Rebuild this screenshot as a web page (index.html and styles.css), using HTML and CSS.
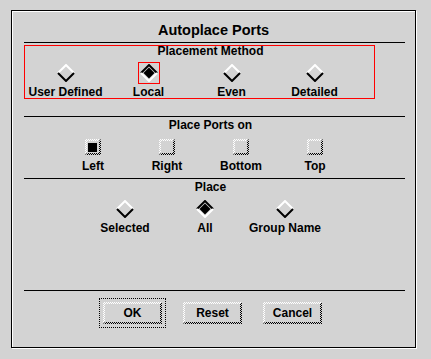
FILE: index.html
```html
<!DOCTYPE html>
<html>
<head>
<meta charset="utf-8">
<link rel="stylesheet" href="styles.css">
</head>
<body>
<div class="dialog">
  <div class="title">Autoplace Ports</div>
  <div class="sep"></div>

  <div class="section method">
    <div class="sec-title">Placement Method</div>
    <div class="opts cols-method">
      <div class="opt">
        <span class="rwrap"><svg class="dia" width="18" height="18" viewBox="0 0 18 18"><path d="M1 9 L9 1 L17 9" class="hi"/><path d="M1 9 L9 17 L17 9" class="lo"/></svg></span>
        <span class="lbl">User Defined</span>
      </div>
      <div class="opt">
        <span class="rwrap focus"><svg class="dia" width="18" height="18" viewBox="0 0 18 18"><path d="M9 3.5 L14.5 9 L9 14.5 L3.5 9 Z" class="fill"/><path d="M1 9 L9 1 L17 9" class="lo"/><path d="M1 9 L9 17 L17 9" class="hi"/></svg></span>
        <span class="lbl">Local</span>
      </div>
      <div class="opt">
        <span class="rwrap"><svg class="dia" width="18" height="18" viewBox="0 0 18 18"><path d="M1 9 L9 1 L17 9" class="hi"/><path d="M1 9 L9 17 L17 9" class="lo"/></svg></span>
        <span class="lbl">Even</span>
      </div>
      <div class="opt">
        <span class="rwrap"><svg class="dia" width="18" height="18" viewBox="0 0 18 18"><path d="M1 9 L9 1 L17 9" class="hi"/><path d="M1 9 L9 17 L17 9" class="lo"/></svg></span>
        <span class="lbl">Detailed</span>
      </div>
    </div>
  </div>

  <div class="sep sep2"></div>

  <div class="section ports">
    <div class="sec-title">Place Ports on</div>
    <div class="opts cols-ports">
      <div class="opt">
        <span class="check bevel on"><span class="mark"></span></span>
        <span class="lbl lbl-check">Left</span>
      </div>
      <div class="opt">
        <span class="check bevel"></span>
        <span class="lbl lbl-check">Right</span>
      </div>
      <div class="opt">
        <span class="check bevel"></span>
        <span class="lbl lbl-check">Bottom</span>
      </div>
      <div class="opt">
        <span class="check bevel"></span>
        <span class="lbl lbl-check">Top</span>
      </div>
    </div>
  </div>

  <div class="sep sep3"></div>

  <div class="section place">
    <div class="sec-title">Place</div>
    <div class="opts cols-place">
      <div class="opt">
        <span class="rwrap"><svg class="dia" width="18" height="18" viewBox="0 0 18 18"><path d="M1 9 L9 1 L17 9" class="hi"/><path d="M1 9 L9 17 L17 9" class="lo"/></svg></span>
        <span class="lbl">Selected</span>
      </div>
      <div class="opt">
        <span class="rwrap"><svg class="dia" width="18" height="18" viewBox="0 0 18 18"><path d="M9 3.5 L14.5 9 L9 14.5 L3.5 9 Z" class="fill"/><path d="M1 9 L9 1 L17 9" class="lo"/><path d="M1 9 L9 17 L17 9" class="hi"/></svg></span>
        <span class="lbl">All</span>
      </div>
      <div class="opt">
        <span class="rwrap"><svg class="dia" width="18" height="18" viewBox="0 0 18 18"><path d="M1 9 L9 1 L17 9" class="hi"/><path d="M1 9 L9 17 L17 9" class="lo"/></svg></span>
        <span class="lbl">Group Name</span>
      </div>
    </div>
  </div>

  <div class="sep sep4"></div>

  <div class="buttons">
    <span class="btn bevel default">OK</span>
    <span class="btn bevel">Reset</span>
    <span class="btn bevel">Cancel</span>
  </div>
</div>
</body>
</html>
```
FILE: styles.css
```css
html, body {
  margin: 0;
  padding: 0;
  background: #d3d3d3;
}

body {
  font-family: "Liberation Sans", Arial, sans-serif;
  font-weight: bold;
  font-size: 12px;
  color: #000;
  padding: 10px 0 0 11px;
  height: 359px;
  box-sizing: border-box;
}

.dialog {
  width: 405px;
  height: 338px;
  box-sizing: border-box;
  border: 1px solid #000;
  box-shadow: 1px 1px 0 #fff, inset 1px 1px 0 #fff;
  padding: 11px 10px 0 12px;
  display: flex;
  flex-direction: column;
}

.title {
  font-size: 14.5px;
  line-height: 16px;
  height: 16px;
  text-align: center;
  margin-left: -12px;
  margin-right: -10px;
}

.sep {
  height: 1px;
  background: #000;
  margin-top: 4px;
  flex: none;
}
.sep2 { margin-top: 17px; }
.sep3 { margin-top: 5px; }
.sep4 { margin-top: 55px; }

.section {
  position: relative;
  display: flex;
  flex-direction: column;
  margin-top: 1px;
}

.method::before {
  content: "";
  position: absolute;
  top: 1px;
  left: 0;
  width: 351px;
  height: 54px;
  box-sizing: border-box;
  border: 1px solid #ff0000;
  pointer-events: none;
}

.sec-title {
  line-height: 14px;
  height: 14px;
  text-align: center;
  padding-right: 8px;
}

.opts {
  display: grid;
  margin-top: 4px;
}
.cols-method { grid-template-columns: repeat(4, 83px); }
.cols-ports { grid-template-columns: repeat(4, 74px); margin-left: 32px; margin-top: 7px; }
.cols-place { grid-template-columns: repeat(3, 80px); margin-left: 61px; }

.opt {
  display: flex;
  flex-direction: column;
  align-items: center;
}

.rwrap {
  width: 22px;
  height: 22px;
  box-sizing: border-box;
  display: flex;
  align-items: center;
  justify-content: center;
}
.rwrap.focus { border: 1px solid #ff0000; }

.dia { display: block; }
.dia path { fill: none; stroke-width: 2; stroke-linejoin: miter; }
.dia .hi { stroke: #fff; }
.dia .lo { stroke: #000; }
.dia .fill { fill: #000; stroke: none; }

.lbl {
  line-height: 14px;
  height: 14px;
  margin-top: 1px;
  white-space: nowrap;
}
.lbl-check { margin-top: 4px; }

.bevel {
  position: relative;
  background: #d3d3d3;
}
.bevel::before {
  content: "";
  position: absolute;
  inset: 0;
  background: conic-gradient(#ffffff 0 25%, #d3d3d3 0 50%, #ffffff 0 75%, #d3d3d3 0) 0 0 / 2px 2px;
  clip-path: polygon(0 0, 100% 0, calc(100% - 2px) 2px, 2px 2px, 2px calc(100% - 2px), 0 100%);
}
.bevel::after {
  content: "";
  position: absolute;
  inset: 0;
  background: conic-gradient(#000000 0 25%, #d3d3d3 0 50%, #000000 0 75%, #d3d3d3 0) 0 0 / 2px 2px;
  clip-path: polygon(100% 0, 100% 100%, 0 100%, 2px calc(100% - 2px), calc(100% - 2px) calc(100% - 2px), calc(100% - 2px) 2px);
}

.check {
  width: 16px;
  height: 16px;
  display: block;
  box-sizing: border-box;
}
.check .mark {
  position: absolute;
  left: 3px;
  top: 4px;
  width: 9px;
  height: 9px;
  background: #000;
}

.buttons {
  display: flex;
  gap: 21px;
  margin-top: 11px;
  margin-left: 79px;
}
.btn {
  width: 59px;
  height: 22px;
  line-height: 22px;
  text-align: center;
  display: block;
  box-sizing: border-box;
}
.btn.default {
  outline: 1px dotted #000;
  outline-offset: 3px;
}
```
